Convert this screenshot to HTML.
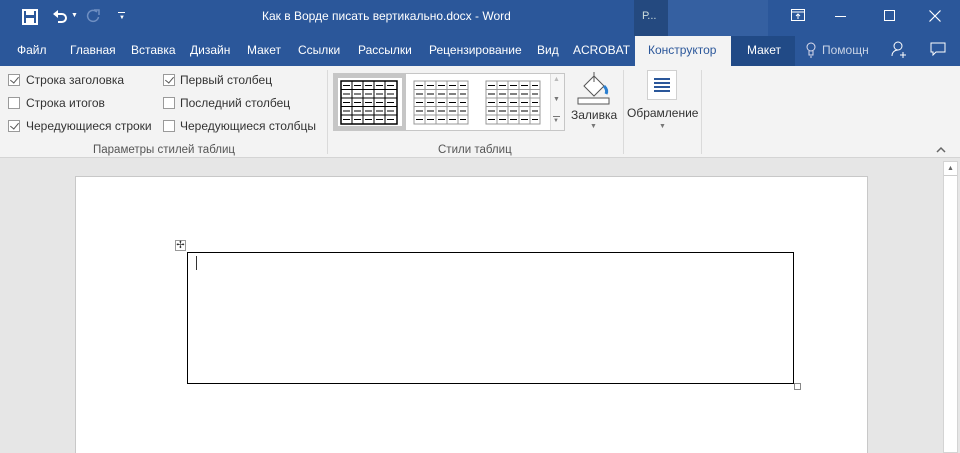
<!DOCTYPE html>
<html><head><meta charset="utf-8"><style>
*{margin:0;padding:0;box-sizing:border-box}
html,body{width:960px;height:453px;overflow:hidden}
body{font-family:"Liberation Sans","Noto Sans CJK SC",sans-serif;background:#e6e6e6;position:relative;font-size:12px}
.top{position:absolute;left:0;top:0;width:960px;height:66px;background:#2b579a;color:#fff}
.abs{position:absolute;white-space:nowrap}
.tab{position:absolute;top:43px;font-size:12px;color:#fff;white-space:nowrap}
.ribbon{position:absolute;left:0;top:66px;width:960px;height:92px;background:#f3f3f3;border-bottom:1px solid #d4d4d4}
.cb{position:absolute;width:12px;height:12px;border:1px solid #9a9a9a;background:#fff}
.cb.c::after{content:"";position:absolute;left:3px;top:0px;width:4px;height:7px;border:solid #555;border-width:0 1px 1px 0;transform:rotate(40deg)}
.lbl{position:absolute;font-size:12px;color:#333;white-space:nowrap}
.sep{position:absolute;top:70px;width:1px;height:84px;background:#dadada}
</style></head><body>
<div class="top">
  <svg class="abs" style="left:22px;top:9px" width="16" height="16"><rect x="1" y="1" width="14" height="14" fill="none" stroke="#fff" stroke-width="2"/><rect x="4" y="2" width="8" height="4" fill="#fff"/><rect x="4" y="9" width="8" height="5" fill="#fff"/></svg>
  <svg class="abs" style="left:52px;top:9px" width="16" height="14"><path d="M2 5h8a4 4 0 0 1 0 8H6" fill="none" stroke="#fff" stroke-width="2"/><path d="M1 5l5-4v8z" fill="#fff"/></svg>
  <div class="abs" style="left:71px;top:12px;font-size:7px">▼</div>
  <svg class="abs" style="left:86px;top:9px" width="14" height="14"><path d="M11 3A5.5 5.5 0 1 0 12.5 8" fill="none" stroke="#6f8fc2" stroke-width="1.5"/><path d="M8 1h5v5" fill="none" stroke="#6f8fc2" stroke-width="1.5"/></svg>
  <div class="abs" style="left:118px;top:12px;width:7px;height:1px;background:#fff"></div>
  <div class="abs" style="left:119px;top:15px;font-size:6px">▼</div>
  <div class="abs" style="left:262px;top:9px;font-size:12px">Как в Ворде писать вертикально.docx - Word</div>
  <div class="abs" style="left:634px;top:0;width:34px;height:36px;background:#24497f"></div>
  <div class="abs" style="left:642px;top:10px;font-size:11px;color:#cdd">Р...</div>
  <div class="abs" style="left:668px;top:0;width:100px;height:36px;background:#3a64a4;opacity:.7"></div>
  <svg class="abs" style="left:791px;top:9px" width="14" height="12"><rect x="0.5" y="0.5" width="13" height="11" fill="none" stroke="#fff"/><line x1="0" y1="3" x2="14" y2="3" stroke="#fff"/><path d="M7 10V5M5 7l2-2 2 2" stroke="#fff" fill="none"/></svg>
  <div class="abs" style="left:835px;top:16px;width:11px;height:1px;background:#fff"></div>
  <div class="abs" style="left:884px;top:10px;width:11px;height:11px;border:1px solid #fff"></div>
  <svg class="abs" style="left:929px;top:10px" width="12" height="12"><path d="M0.5 0.5l11 11M11.5 0.5l-11 11" stroke="#fff" stroke-width="1.2"/></svg>
  <div class="tab" style="left:17px">Файл</div>
  <div class="tab" style="left:70px">Главная</div>
  <div class="tab" style="left:131px">Вставка</div>
  <div class="tab" style="left:190px">Дизайн</div>
  <div class="tab" style="left:247px">Макет</div>
  <div class="tab" style="left:298px">Ссылки</div>
  <div class="tab" style="left:358px">Рассылки</div>
  <div class="tab" style="left:429px">Рецензирование</div>
  <div class="tab" style="left:537px">Вид</div>
  <div class="tab" style="left:573px">ACROBAT</div>
  <div class="abs" style="left:635px;top:36px;width:96px;height:30px;background:#f3f3f3"></div>
  <div class="tab" style="left:648px;color:#2b579a">Конструктор</div>
  <div class="abs" style="left:731px;top:36px;width:64px;height:30px;background:#214a86"></div>
  <div class="tab" style="left:747px">Макет</div>
  <svg class="abs" style="left:806px;top:42px" width="10" height="16"><circle cx="5" cy="5" r="4" fill="none" stroke="#dde"/><path d="M3 9v4h4V9M4 15h2" stroke="#dde" fill="none"/></svg>
  <div class="tab" style="left:822px;color:#c8d3e6">Помощн</div>
  <svg class="abs" style="left:891px;top:41px" width="18" height="17"><circle cx="7" cy="5" r="4" fill="none" stroke="#fff"/><path d="M1 15c0-4 3-6 6-6M12 11v6M9 14h6" stroke="#fff" fill="none"/></svg>
  <svg class="abs" style="left:930px;top:42px" width="16" height="14"><path d="M1 1h14v9H6l-3 3v-3H1z" fill="none" stroke="#fff"/></svg>
</div>
<div class="ribbon">
  <div class="cb c" style="left:8px;top:8px"></div><div class="lbl" style="left:26px;top:7px">Строка заголовка</div>
  <div class="cb" style="left:8px;top:31px"></div><div class="lbl" style="left:26px;top:30px">Строка итогов</div>
  <div class="cb c" style="left:8px;top:54px"></div><div class="lbl" style="left:26px;top:53px">Чередующиеся строки</div>
  <div class="cb c" style="left:163px;top:8px"></div><div class="lbl" style="left:180px;top:7px">Первый столбец</div>
  <div class="cb" style="left:163px;top:31px"></div><div class="lbl" style="left:180px;top:30px">Последний столбец</div>
  <div class="cb" style="left:163px;top:54px"></div><div class="lbl" style="left:180px;top:53px">Чередующиеся столбцы</div>
  <div class="lbl" style="left:93px;top:78px;color:#555;font-size:11.5px">Параметры стилей таблиц</div>
  <div class="lbl" style="left:438px;top:78px;color:#555;font-size:11.5px">Стили таблиц</div>
  <div class="abs" style="left:333px;top:7px;width:232px;height:58px;background:#fff;border:1px solid #c6c6c6"></div>
  <div class="abs" style="left:334px;top:8px;width:72px;height:56px;border:4px solid #c6c6c6"></div>
  <svg class="abs" style="left:340px;top:14px" width="58" height="45">
    <g stroke="#000" fill="none"><rect x="1" y="1" width="56" height="43" stroke-width="1.5"/>
    <path d="M12 1v43M23 1v43M34 1v43M45 1v43M1 9.5h56M1 18h56M1 26.5h56M1 35h56"/></g>
    <g stroke="#000"><path d="M3 5.5h7M14 5.5h7M25 5.5h7M36 5.5h7M47 5.5h7M3 14h7M14 14h7M25 14h7M36 14h7M47 14h7M3 22.5h7M14 22.5h7M25 22.5h7M36 22.5h7M47 22.5h7M3 31h7M14 31h7M25 31h7M36 31h7M47 31h7M3 39.5h7M14 39.5h7M25 39.5h7M36 39.5h7M47 39.5h7"/></g>
  </svg>
  <svg class="abs" style="left:413px;top:14px" width="56" height="45"><g stroke="#999" fill="none"><rect x="1" y="1" width="54" height="43"/><path d="M12 1v43M23 1v43M34 1v43M45 1v43M1 9.5h54M1 18h54M1 26.5h54M1 35h54"/></g><g stroke="#000"><path d="M3 5.5h7M14 5.5h7M25 5.5h7M36 5.5h7M47 5.5h6M3 14h7M14 14h7M25 14h7M36 14h7M47 14h6M3 22.5h7M14 22.5h7M25 22.5h7M36 22.5h7M47 22.5h6M3 31h7M14 31h7M25 31h7M36 31h7M47 31h6M3 39.5h7M14 39.5h7M25 39.5h7M36 39.5h7M47 39.5h6"/></g></svg>
  <svg class="abs" style="left:485px;top:14px" width="56" height="45"><g stroke="#999" fill="none"><rect x="1" y="1" width="54" height="43"/><path d="M12 1v43M23 1v43M34 1v43M45 1v43M1 9.5h54M1 18h54M1 26.5h54M1 35h54"/></g><g stroke="#000"><path d="M3 5.5h7M14 5.5h7M25 5.5h7M36 5.5h7M47 5.5h6M3 14h7M14 14h7M25 14h7M36 14h7M47 14h6M3 22.5h7M14 22.5h7M25 22.5h7M36 22.5h7M47 22.5h6M3 31h7M14 31h7M25 31h7M36 31h7M47 31h6M3 39.5h7M14 39.5h7M25 39.5h7M36 39.5h7M47 39.5h6"/></g></svg>
  <div class="abs" style="left:550px;top:8px;width:14px;height:56px;border-left:1px solid #ddd;background:#f6f6f6"></div>
  <div class="abs" style="left:553px;top:10px;font-size:7px;color:#bbb">▲</div>
  <div class="abs" style="left:553px;top:30px;font-size:7px;color:#777">▼</div>
  <div class="abs" style="left:553px;top:50px;width:7px;height:1px;background:#777"></div>
  <div class="abs" style="left:553px;top:52px;font-size:6px;color:#777">▼</div>
  <svg class="abs" style="left:576px;top:4px" width="36" height="36"><path d="M8 16l10-10 10 10-10 10z" fill="#fff" stroke="#555"/><path d="M18 2v10" stroke="#555"/><path d="M28 16c3 3 3 6 2 8" stroke="#2b7fd0" stroke-width="3" fill="none"/><rect x="2" y="28" width="31" height="6" fill="#fff" stroke="#555"/></svg>
  <div class="lbl" style="left:571px;top:42px;font-size:12px">Заливка</div>
  <div class="lbl" style="left:590px;top:57px;font-size:7px;color:#777">▼</div>
  <div class="abs" style="left:647px;top:4px;width:30px;height:30px;background:#fff;border:1px solid #d0d0d0"></div>
  <div class="abs" style="left:654px;top:12px;width:16px;height:2px;background:#2b579a;box-shadow:0 4px 0 #2b579a,0 8px 0 #2b579a,0 12px 0 #2b579a"></div>
  <div class="lbl" style="left:627px;top:40px;font-size:12px">Обрамление</div>
  <div class="lbl" style="left:659px;top:57px;font-size:7px;color:#777">▼</div>
  <svg class="abs" style="left:936px;top:80px" width="10" height="7"><path d="M1 6l4-4 4 4" stroke="#666" stroke-width="1.5" fill="none"/></svg>
</div>
<div class="sep" style="left:327px"></div>
<div class="sep" style="left:623px"></div>
<div class="sep" style="left:701px"></div>
<div class="abs" style="left:75px;top:176px;width:793px;height:290px;background:#fff;border:1px solid #c8c8c8"></div>
<div class="abs" style="left:187px;top:252px;width:607px;height:132px;border:1px solid #000"></div>
<div class="abs" style="left:196px;top:256px;width:1px;height:14px;background:#333"></div>
<div class="abs" style="left:175px;top:240px;width:11px;height:11px;border:1px solid #999;background:#fff;font-size:10px;line-height:9px;text-align:center;color:#333">✢</div>
<div class="abs" style="left:794px;top:383px;width:7px;height:7px;border:1px solid #888;background:#fff"></div>
<div class="abs" style="left:943px;top:161px;width:15px;height:292px;background:#fff;border:1px solid #d4d4d4"></div>
<div class="abs" style="left:944px;top:162px;width:13px;height:14px;border-bottom:1px solid #ccc;font-size:7px;color:#666;text-align:center;line-height:14px">▲</div>
</body></html>
